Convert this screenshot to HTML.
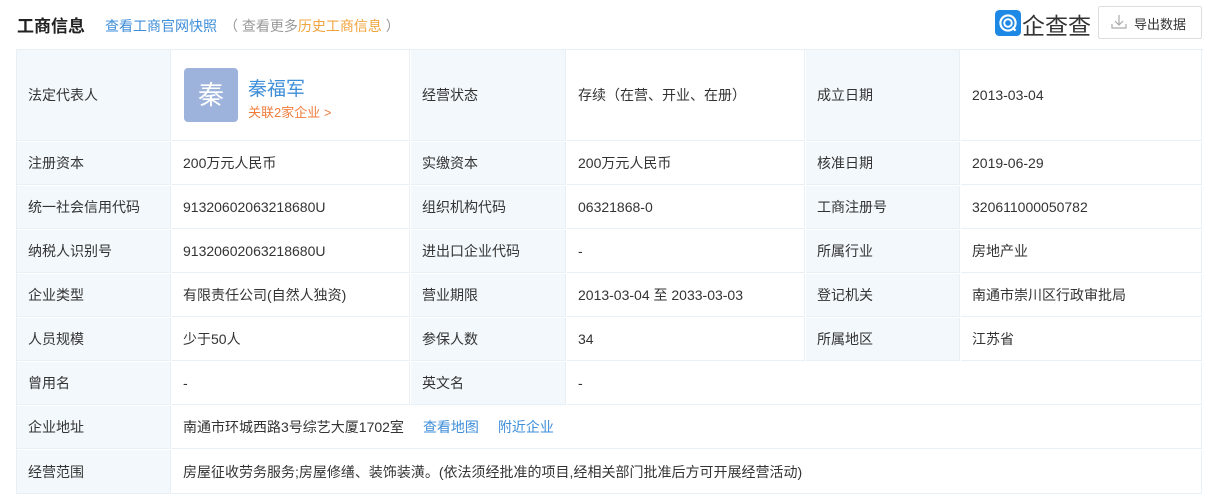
<!DOCTYPE html>
<html><head><meta charset="utf-8"><style>
*{margin:0;padding:0;box-sizing:border-box}
body{width:1219px;height:494px;background:#fff;font-family:"Liberation Sans","Noto Sans CJK SC",sans-serif;font-size:14px;color:#333;position:relative;overflow:hidden}
.t{position:absolute;white-space:nowrap}
.c{position:absolute;border-right:1px solid #e8f0f6;border-bottom:1px solid #e8f0f6;display:flex;align-items:center;padding-left:11px;white-space:nowrap}
.l{background:#f2f8fc;color:#333}
</style></head><body>
<div class="t" style="left:17px;top:12px;font-size:17px;font-weight:bold;color:#222">工商信息</div>
<div class="t" style="left:105px;top:16px;color:#3f8ed8">查看工商官网快照</div>
<div class="t" style="left:224px;top:16px;color:#999">（ 查看更多<span style="color:#f0a43c">历史工商信息</span> ）</div>
<svg class="t" style="left:995px;top:10px" width="26" height="26" viewBox="0 0 24 24"><rect width="24" height="24" rx="4" fill="#1e88e5"/><circle cx="12" cy="12" r="7" fill="none" stroke="#fff" stroke-width="2"/><circle cx="12" cy="12" r="3.5" fill="none" stroke="#fff" stroke-width="1.8"/><path d="M16 16l3 3" stroke="#fff" stroke-width="2"/></svg>
<div class="t" style="left:1022px;top:7px;font-size:23px;color:#333">企查查</div>
<div class="t" style="left:1098px;top:6px;width:104px;height:33px;border:1px solid #ddd;border-radius:2px;font-size:13px;color:#333;padding:7px 0 0 35px">导出数据</div>
<svg class="t" style="left:1111px;top:14px" width="16" height="16" viewBox="0 0 16 16"><path d="M8 1v10M4 7l4 4 4-4M1 10v4h14v-4" fill="none" stroke="#aaa" stroke-width="1.2"/></svg>
<div style="position:absolute;left:16px;top:49px;width:1187px;height:445px;border-left:1px solid #e8f0f6;border-top:1px solid #e8f0f6"></div>
<div id="g"></div>
<script>
var cols=[16,171,410,566,805,960,1202];
var rows=[49,141,185,229,273,317,361,405,449,494];
var d=[
["法定代表人","",  "经营状态","存续（在营、开业、在册）","成立日期","2013-03-04"],
["注册资本","200万元人民币","实缴资本","200万元人民币","核准日期","2019-06-29"],
["统一社会信用代码","91320602063218680U","组织机构代码","06321868-0","工商注册号","320611000050782"],
["纳税人识别号","91320602063218680U","进出口企业代码","-","所属行业","房地产业"],
["企业类型","有限责任公司(自然人独资)","营业期限","2013-03-04 至 2033-03-03","登记机关","南通市崇川区行政审批局"],
["人员规模","少于50人","参保人数","34","所属地区","江苏省"],
["曾用名","-","英文名","-",null,null],
["企业地址",'南通市环城西路3号综艺大厦1702室<span style="color:#3f8ed8;margin-left:19px">查看地图</span><span style="color:#3f8ed8;margin-left:19px">附近企业</span>',null,null,null,null],
["经营范围","房屋征收劳务服务;房屋修缮、装饰装潢。(依法须经批准的项目,经相关部门批准后方可开展经营活动)",null,null,null,null]];
var h="";
for(var r=0;r<9;r++){for(var c=0;c<6;c++){var v=d[r][c];if(v===null)continue;var e=c+1;while(e<6&&d[r][e]===null)e++;
var x=cols[c],w=cols[e]-x;h+='<div class="c'+(c%2==0?' l':'')+'" style="left:'+(x+1)+'px;top:'+(rows[r]+1)+'px;width:'+(w-1)+'px;height:'+(rows[r+1]-rows[r]-1)+'px">'+v+'</div>';}}
document.getElementById("g").innerHTML=h;
</script>
<div class="t" style="left:184px;top:68px;width:54px;height:54px;background:#9db3dc;border-radius:4px;color:#fff;font-size:26px;text-align:center;line-height:54px">秦</div>
<div class="t" style="left:248px;top:74px;font-size:19px;color:#3f8ed8">秦福军</div>
<div class="t" style="left:248px;top:102px;font-size:13px;color:#f07c3c">关联2家企业 &gt;</div>
</body></html>
